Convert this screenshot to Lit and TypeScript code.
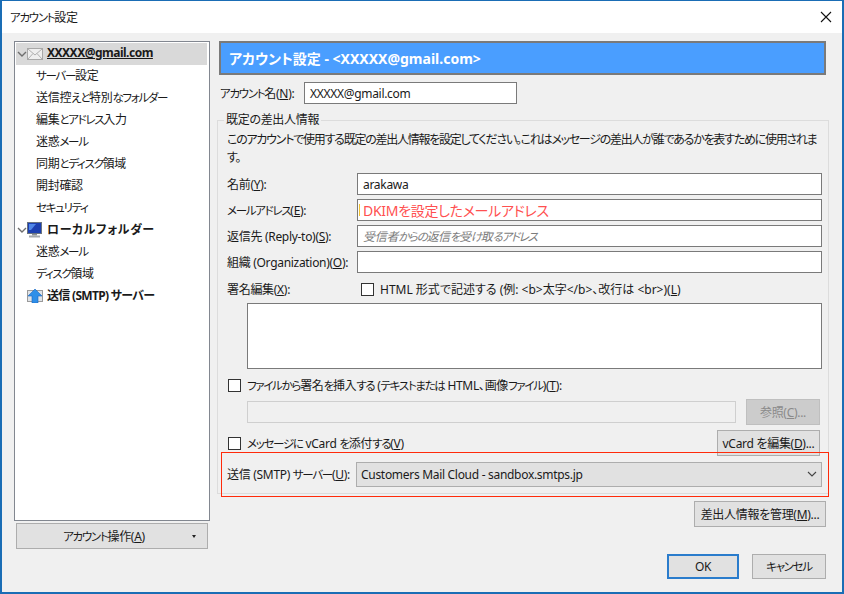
import { LitElement, html, css } from "lit";
import { customElement } from "lit/decorators.js";

const jp = (s: string) =>
  html`<span>${s.split(/([\u3040-\u30ff]+)/).map((p, i) => (i % 2 ? html`<span class="k">${p}</span>` : p))}</span>`;

@customElement("app-root")
export class AppRoot extends LitElement {
  static styles = css`
    :host { display: block; width: 844px; height: 594px; font-family: "Noto Sans", "Noto Sans CJK JP", sans-serif; font-size: 12px; color: #1a1a1a; font-feature-settings: "palt"; letter-spacing: -0.3px; }
    * { box-sizing: border-box; }
    u { text-decoration: underline; text-underline-offset: 1px; }
    .k { font-size: 11.5px; letter-spacing: -1.3px; }
    .window { position: relative; width: 844px; height: 594px; border: 1px solid #1a6db5; border-width: 1px 2px 2px 2px; background: #f0f0f0; display: flex; flex-direction: column; overflow: hidden; }
    .title { height: 32px; flex: none; background: #fff; display: flex; align-items: center; justify-content: space-between; padding: 0 10px 0 8px; }
    .main { flex: 1; display: flex; padding: 8px 16px 0 12px; gap: 8px; }
    .side { width: 196px; flex: none; display: flex; flex-direction: column; }
    .tree { height: 480px; flex: none; background: #fff; border: 1px solid #828790; padding: 1px 1px; }
    .node { height: 22px; display: flex; align-items: center; white-space: nowrap; }
    .node.sel { background: #d9d9d9; margin-right: 1px; }
    .node.child { padding: 0 0 2px 20px; }
    .node.top { font-weight: 700; padding-left: 1px; letter-spacing: -0.5px; }
    .name { margin-left: 4px; padding-bottom: 2px; }
    .email { padding-bottom: 3px; text-decoration: underline; }
    .wide { letter-spacing: 0.6px; }
    .snd { letter-spacing: -0.7px; }
    .chev { width: 10px; flex: none; }
    .ico { flex: none; }
    .actions { margin: 2px 2px 0; height: 26px; }
    .btn { height: 26px; background: #e1e1e1; border: 1px solid #adadad; display: flex; align-items: center; justify-content: center; white-space: nowrap; flex: none; padding: 0; }
    .btn.dis { background: #cccccc; border-color: #bfbfbf; color: #8a8a8a; }
    .btn.def { border: 2px solid #2a7ccc; }
    .acct { position: relative; padding-right: 16px; }
    .drop { position: absolute; right: 11px; top: 11px; width: 0; height: 0; border: 2.5px solid transparent; border-top: 3px solid #222; border-bottom: 0; }
    .content { flex: 1; display: flex; flex-direction: column; min-width: 0; }
    .hdr { height: 34px; flex: none; margin: 0 0 0 1px; background: #4a9eff; border: 2px solid #7a7a7a; color: #fff; font-weight: 700; font-size: 14px; letter-spacing: 0; display: flex; align-items: center; padding: 0 8px; }
    .acname { display: flex; align-items: center; height: 22px; margin: 7px 0 0 2px; }
    .aclabel { width: 84px; flex: none; }
    .input { height: 22px; background: #fff; border: 1px solid #7a7a7a; display: flex; align-items: center; padding: 0 5px; white-space: nowrap; }
    .acname .input { width: 213px; }
    .fs { position: relative; margin: 16px 0 0 -1px; width: 612px; height: 374px; border: 1px solid #dcdcdc; padding: 8px 6px 0 9px; }
    .legend { position: absolute; left: 6px; top: -9px; background: #f0f0f0; padding: 0 2px; line-height: 16px; }
    .desc { line-height: 18px; height: 36px; width: 596px; margin-top: 2px; margin-bottom: -2px; letter-spacing: -1.25px; }
    .rows { display: grid; grid-template-columns: 130px 465px; grid-auto-rows: 22px; row-gap: 4px; margin-top: 8px; align-items: center; }
    .rows > span { white-space: nowrap; }
    .hint { color: #7c7c7c; font-style: italic; }
    .red { color: #ff5050; font-size: 14px; padding-left: 1px; gap: 3px; }
    .caret { width: 1px; height: 12px; background: #f2c230; flex: none; }
    .sigrow { display: flex; align-items: center; height: 22px; margin-top: 5px; }
    .sigl { width: 134px; flex: none; }
    .chk { display: flex; align-items: center; gap: 6px; white-space: nowrap; }
    .chk > span:last-child { padding-bottom: 1px; }
    .loose { letter-spacing: 0; }
    .box { width: 13px; height: 13px; background: #fff; border: 1px solid #333; flex: none; }
    .ta { margin: 3px 0 0 20px; width: 575px; height: 66px; background: #fff; border: 1px solid #7a7a7a; }
    .file { margin-top: 5px; height: 22px; padding-left: 1px; }
    .browse { display: flex; margin-top: 3px; height: 26px; align-items: center; padding-left: 20px; gap: 10px; }
    .dinput { width: 489px; height: 22px; background: #f0f0f0; border: 1px solid #cfcfcf; }
    .browse .btn { width: 74px; }
    .vrow { display: flex; justify-content: space-between; align-items: center; height: 26px; margin-top: 5px; padding-left: 1px; width: 593px; }
    .vrow .btn { width: 103px; }
    .smtp { display: flex; align-items: center; height: 26px; margin-top: 5px; }
    .smtpl { width: 129px; flex: none; white-space: nowrap; }
    .select { width: 466px; height: 25px; background: #e1e1e1; border: 1px solid #adadad; display: flex; align-items: center; justify-content: space-between; padding: 0 4px 0 4px; }
    .mgr { display: flex; justify-content: flex-end; margin-top: 7px; }
    .mgr .btn { width: 132px; }
    .foot { display: flex; justify-content: flex-end; gap: 13px; margin-top: 27px; }
    .foot .btn { height: 25px; }
    .ok { width: 72px; }
    .cancel { width: 74px; }
    .mark { position: absolute; left: 219px; top: 451px; width: 608px; height: 45px; border: 1px solid #ff2a0a; pointer-events: none; }
  `;

  private chev() {
    return html`<svg class="chev" width="10" height="8" viewBox="0 0 10 8"><path d="M1 2l4 4 4-4" fill="none" stroke="#6e6e6e" stroke-width="1.4"/></svg>`;
  }
  private mail() {
    return html`<svg class="ico" width="16" height="12" viewBox="0 0 16 12"><rect x=".5" y=".5" width="15" height="11" fill="#efefef" stroke="#a8a8a8"/><path d="M1 1l7 6 7-6M1 11l5-5.5M15 11l-5-5.5" fill="none" stroke="#b0b0b0"/></svg>`;
  }
  private pc() {
    return html`<svg class="ico" width="16" height="16" viewBox="0 0 16 16"><rect x=".5" y=".5" width="14" height="11" fill="#1c3fb0" stroke="#6a7480"/><path d="M2 2h7l-5 6H2z" fill="#4f86e8"/><rect x="5" y="12" width="5" height="1.5" fill="#8a8f94"/><rect x="2" y="13.5" width="11" height="2" fill="#a4a8ac"/></svg>`;
  }
  private send() {
    return html`<svg class="ico" width="16" height="14" viewBox="0 0 16 14"><rect x=".5" y="1.5" width="15" height="11" fill="#dfe3e8" stroke="#9a9a9a"/><path d="M8 0l7 7h-4v7H5V7H1z" fill="#2f8fe8" stroke="#1a66c0" stroke-width=".6"/></svg>`;
  }

  render() {
    return html`
      <div class="window">
        <div class="title">
          ${jp("アカウント設定")}
          <svg width="12" height="12" viewBox="0 0 12 12"><path d="M1 1l10 10M11 1L1 11" stroke="#111" stroke-width="1.1"/></svg>
        </div>
        <div class="main">
          <div class="side">
            <div class="tree">
              <div class="node top sel">${this.chev()}${this.mail()}<span class="name email">XXXXX@gmail.com</span></div>
              ${["サーバー設定", "送信控えと特別なフォルダー", "編集とアドレス入力", "迷惑メール", "同期とディスク領域", "開封確認", "セキュリティ"].map(
                (t) => html`<div class="node child">${jp(t)}</div>`
              )}
              <div class="node top">${this.chev()}${this.pc()}<span class="name wide">ローカルフォルダー</span></div>
              <div class="node child">${jp("迷惑メール")}</div>
              <div class="node child">${jp("ディスク領域")}</div>
              <div class="node top"><span class="chev"></span>${this.send()}<span class="name snd">送信 (SMTP) サーバー</span></div>
            </div>
            <div class="btn actions acct"><span>${jp("アカウント操作")}(<u>A</u>)</span><span class="drop"></span></div>
          </div>
          <div class="content">
            <div class="hdr">アカウント設定 - &lt;XXXXX@gmail.com&gt;</div>
            <div class="acname"><span class="aclabel">${jp("アカウント名")}(<u>N</u>):</span><div class="input">XXXXX@gmail.com</div></div>
            <div class="fs">
              <span class="legend">既定の差出人情報</span>
              <div class="desc">このアカウントで使用する既定の差出人情報を設定してください。これはメッセージの差出人が誰であるかを表すために使用されます。</div>
              <div class="rows">
                <span>名前(<u>Y</u>):</span><div class="input">arakawa</div>
                <span>${jp("メールアドレス")}(<u>E</u>):</span><div class="input red"><i class="caret"></i>DKIMを設定したメールアドレス</div>
                <span>返信先 (Reply-to)(<u>S</u>):</span><div class="input hint">${jp("受信者からの返信を受け取るアドレス")}</div>
                <span>組織 (Organization)(<u>O</u>):</span><div class="input"></div>
              </div>
              <div class="sigrow">
                <span class="sigl">署名編集(<u>X</u>):</span>
                <span class="chk"><span class="box"></span><span class="loose">HTML 形式で記述する (例: &lt;b&gt;太字&lt;/b&gt;、改行は &lt;br&gt;)(<u>L</u>)</span></span>
              </div>
              <div class="ta"></div>
              <div class="file chk"><span class="box"></span><span>${jp("ファイルから署名を挿入する (テキストまたは HTML、画像ファイル)")}(<u>T</u>):</span></div>
              <div class="browse"><div class="dinput"></div><div class="btn dis"><span>参照(<u>C</u>)...</span></div></div>
              <div class="vrow"><span class="chk"><span class="box"></span><span>${jp("メッセージに vCard を添付する")}(<u>V</u>)</span></span><div class="btn"><span>vCard を編集(<u>D</u>)...</span></div></div>
              <div class="smtp"><span class="smtpl">${jp("送信 (SMTP) サーバー")}(<u>U</u>):</span>
                <div class="select"><span>Customers Mail Cloud - sandbox.smtps.jp</span>
                  <svg width="10" height="6" viewBox="0 0 10 6"><path d="M1 1l4 4 4-4" fill="none" stroke="#444" stroke-width="1.1"/></svg>
                </div>
              </div>
            </div>
            <div class="mgr"><div class="btn"><span>差出人情報を管理(<u>M</u>)...</span></div></div>
            <div class="foot"><div class="btn def ok">OK</div><div class="btn cancel">${jp("キャンセル")}</div></div>
          </div>
        </div>
        <div class="mark"></div>
      </div>
    `;
  }
}
